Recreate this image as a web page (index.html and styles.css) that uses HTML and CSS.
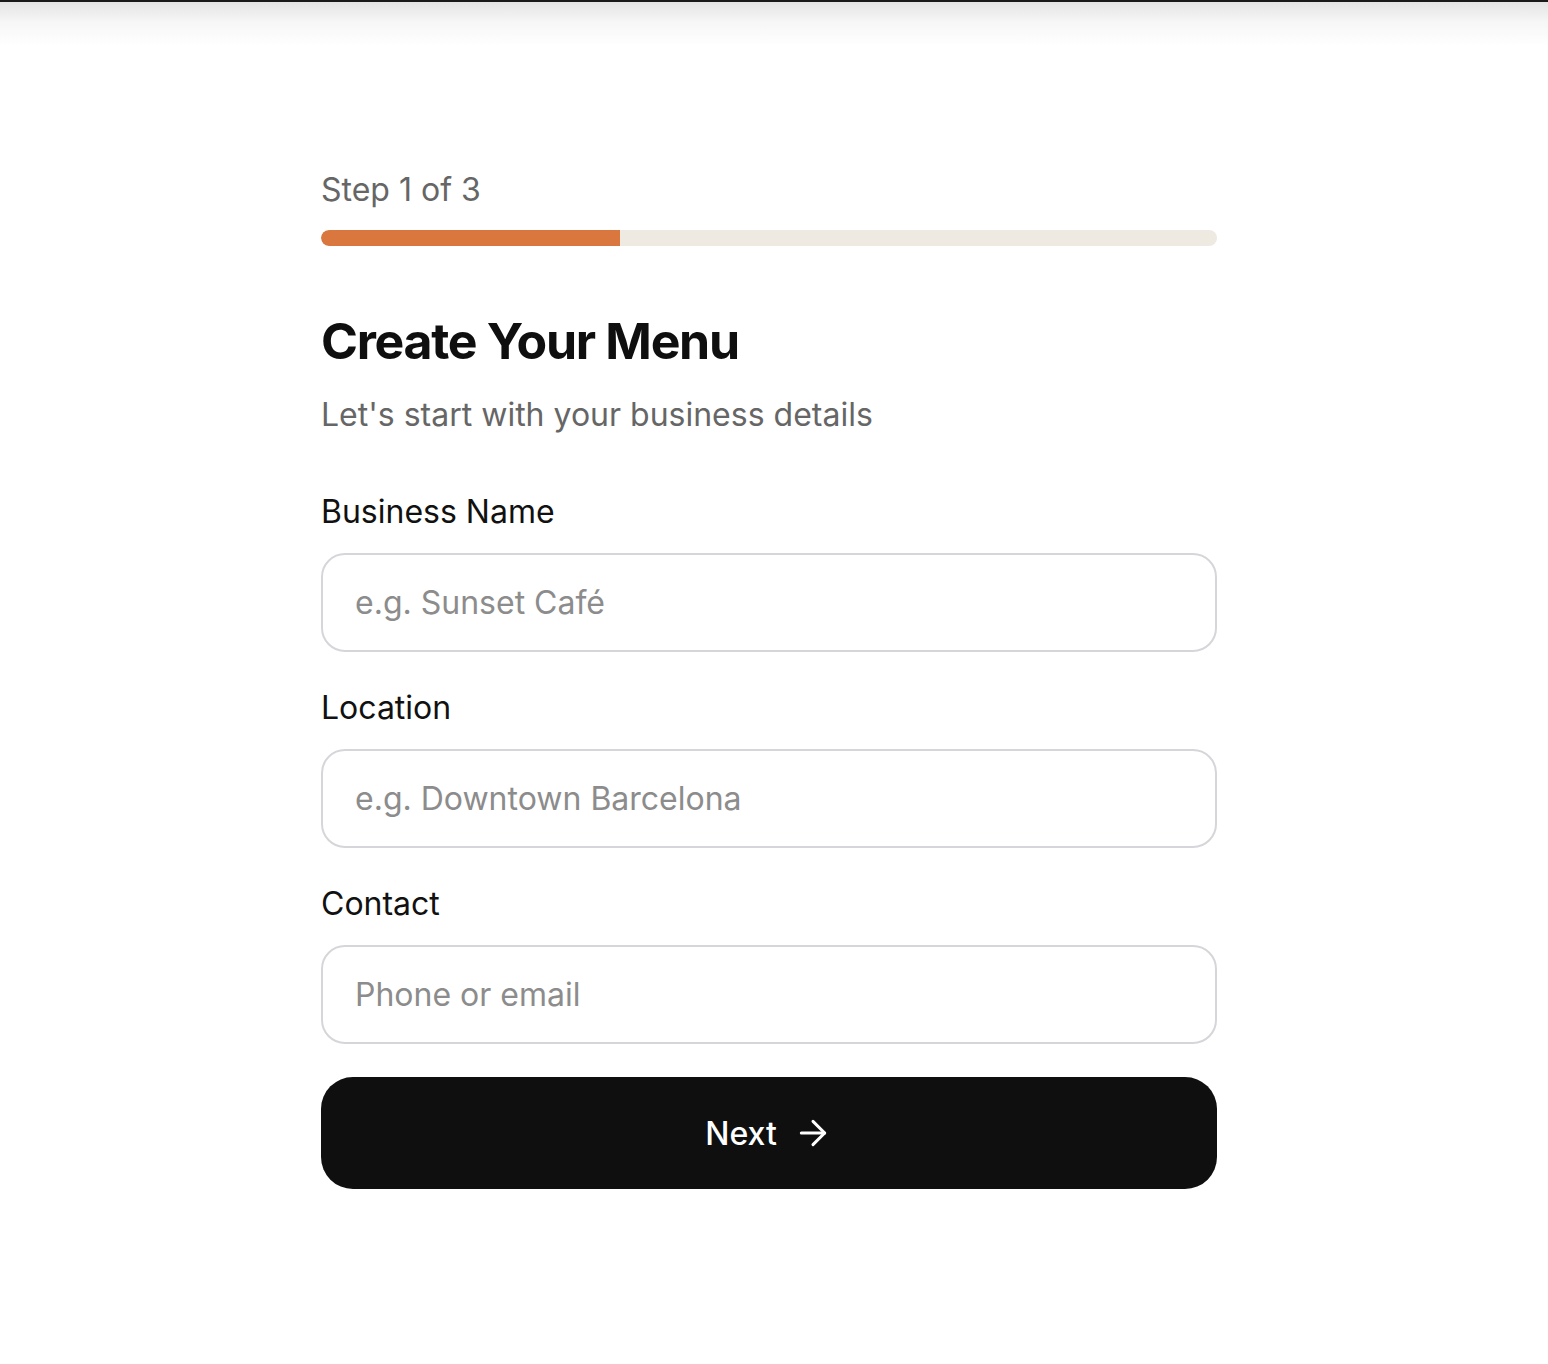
FILE: index.html
```html
<!DOCTYPE html>
<html lang="en">
<head>
    <meta charset="UTF-8">
    <meta name="viewport" content="width=device-width, initial-scale=1.0">
    <title>Create Your Menu</title>
    <link rel="stylesheet" href="styles.css">
</head>
<body>
    <!-- sombra do topo -->
    <div class="top-shade"></div>

    <main class="page">
        <div class="wizard">
            <!-- progresso -->
            <p class="step">Step 1 of 3</p>
            <div class="progress">
                <div class="progress-fill" style="width: 33.333%"></div>
            </div>

            <h1>Create Your Menu</h1>
            <p class="subtitle">Let's start with your business details</p>

            <!-- campos do negocio -->
            <form class="form">
                <div class="field">
                    <label for="business">Business Name</label>
                    <input type="text" id="business" placeholder="e.g. Sunset Café">
                </div>
                <div class="field">
                    <label for="location">Location</label>
                    <input type="text" id="location" placeholder="e.g. Downtown Barcelona">
                </div>
                <div class="field">
                    <label for="contact">Contact</label>
                    <input type="text" id="contact" placeholder="Phone or email">
                </div>

                <button type="button" class="btn-next">
                    Next
                    <svg width="40" height="40" viewBox="0 0 24 24" fill="none" stroke="currentColor" stroke-width="1.8" stroke-linecap="round" stroke-linejoin="round">
                        <path d="M5 12h14"></path>
                        <path d="m12 5 7 7-7 7"></path>
                    </svg>
                </button>
            </form>
        </div>
    </main>
</body>
</html>
```

FILE: styles.css
```css
* {
  margin: 0;
  padding: 0;
  box-sizing: border-box;
}

body {
  font-family: 'Inter', 'Noto Sans', sans-serif;
  background-color: white;
  color: #111;
}

.top-shade {
  height: 46px;
  border-top: 2px solid #1a1a1a;
  background: linear-gradient(to bottom, #e4e4e4, #f6f6f6 45%, #ffffff);
}

.page {
  display: flex;
  justify-content: center;
  padding-right: 10px;
}

.wizard {
  width: 896px;
  padding-top: 123px;
}

.step {
  font-size: 32px;
  line-height: 42px;
  color: #666;
}

.progress {
  margin-top: 19px;
  height: 16px;
  background-color: #eee9e1;
  border-radius: 8px;
  overflow: hidden;
}

.progress-fill {
  height: 100%;
  background-color: #d9773f;
  border-radius: 8px 0 0 8px;
}

h1 {
  margin-top: 66px;
  font-size: 50px;
  line-height: 58px;
  font-weight: 700;
  letter-spacing: -1.3px;
  color: #0f0f0f;
}

.subtitle {
  margin-top: 21px;
  font-size: 32px;
  line-height: 48px;
  color: #666;
}

.form {
  margin-top: 50px;
  display: flex;
  flex-direction: column;
}

.field {
  display: flex;
  flex-direction: column;
  gap: 18px;
  margin-bottom: 33px;
}

.field label {
  font-size: 32px;
  line-height: 46px;
  color: #111;
}

.field input {
  height: 99px;
  padding: 0 32px;
  border: 2px solid #d6d6da;
  border-radius: 24px;
  font-family: inherit;
  font-size: 32px;
  color: #111;
  outline: none;
}

.field input::placeholder {
  color: #8c8c8c;
}

.btn-next {
  height: 112px;
  border: none;
  border-radius: 32px;
  background-color: #0f0f0f;
  color: white;
  font-family: inherit;
  font-size: 32px;
  font-weight: 500;
  display: flex;
  align-items: center;
  justify-content: center;
  gap: 16px;
}
```
